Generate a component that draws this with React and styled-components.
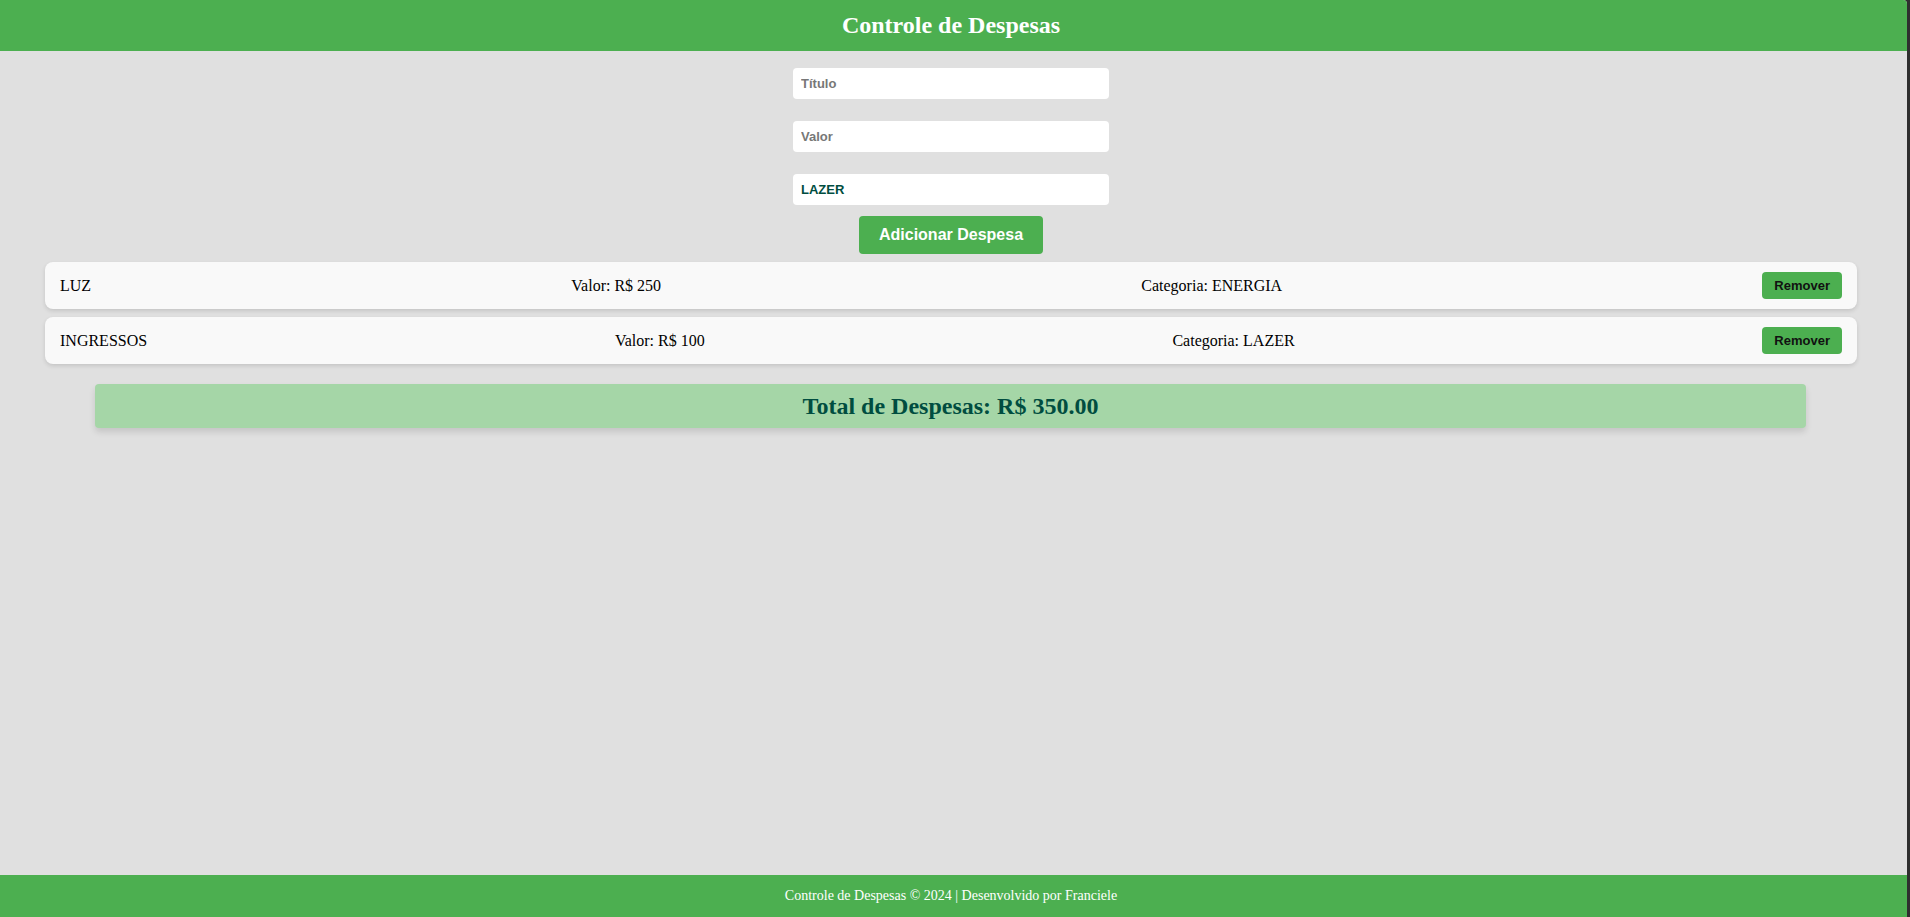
import React from "react";
import styled, { createGlobalStyle } from "styled-components";

const GlobalStyle = createGlobalStyle`
  html, body { margin: 0; padding: 0; }
  body { font-family: "Liberation Serif", "Times New Roman", serif; background: #2f2f2f; }
  * { box-sizing: content-box; }
`;

const Shell = styled.div`
  display: flex;
  min-height: 100vh;
  background: #2f2f2f;
`;

const Page = styled.div`
  flex: 1;
  margin-right: 3px;
  display: flex;
  flex-direction: column;
  min-height: 100vh;
  background: #e0e0e0;
  border-top-right-radius: 4px;
  overflow: hidden;
`;

const Header = styled.header`
  background: #4caf50;
  padding: 12px 5px 12px 0;
  text-align: center;
`;

const Title = styled.h1`
  margin: 0;
  font-family: "Liberation Serif", "Times New Roman", serif;
  font-size: 24px;
  line-height: 27px;
  font-weight: bold;
  color: #ffffff;
`;

const Main = styled.main`
  flex: 1;
  padding: 17px 5px 0 0;
  display: flex;
  flex-direction: column;
`;

const Form = styled.form`
  display: flex;
  flex-direction: column;
  align-items: center;
`;

const Field = styled.input`
  width: 300px;
  padding: 8px;
  height: 15px;
  border: none;
  border-radius: 4px;
  background: #ffffff;
  font-family: "Liberation Sans", Arial, sans-serif;
  font-size: 13px;
  font-weight: bold;
  color: #004d40;
  margin-bottom: ${(p) => p.$gap}px;
  outline: none;
  &::placeholder { color: #777777; }
`;

const Select = styled.select`
  appearance: none;
  -webkit-appearance: none;
  width: 300px;
  padding: 8px;
  height: 15px;
  line-height: 15px;
  box-sizing: content-box;
  border: none;
  border-radius: 4px;
  background: #ffffff;
  font-family: "Liberation Sans", Arial, sans-serif;
  font-size: 13px;
  font-weight: bold;
  color: #004d40;
  margin-bottom: 11px;
  outline: none;
`;

const AddButton = styled.button`
  background: #4caf50;
  color: #ffffff;
  border: none;
  border-radius: 4px;
  padding: 10px 20px;
  height: 18px;
  line-height: 18px;
  font-family: "Liberation Sans", Arial, sans-serif;
  font-size: 16px;
  font-weight: bold;
  cursor: pointer;
`;

const List = styled.ul`
  list-style: none;
  margin: 8px 45px 0;
  padding: 0;
  display: flex;
  flex-direction: column;
  gap: 8px;
`;

const Item = styled.li`
  display: flex;
  justify-content: space-between;
  align-items: center;
  background: #f9f9f9;
  border-radius: 8px;
  padding: 10px 15px;
  box-shadow: 0 2px 4px rgba(0, 0, 0, 0.12);
  font-family: "Liberation Serif", "Times New Roman", serif;
  font-size: 16px;
  color: #000000;
`;

const Cell = styled.span`
  white-space: nowrap;
`;

const RemoveButton = styled.button`
  background: #4caf50;
  color: #111111;
  border: none;
  border-radius: 4px;
  padding: 6px 12px;
  height: 15px;
  line-height: 15px;
  font-family: "Liberation Sans", Arial, sans-serif;
  font-size: 13px;
  font-weight: bold;
  cursor: pointer;
`;

const TotalBox = styled.div`
  margin: 20px 96px 0 95px;
  background: #a5d6a7;
  border-radius: 4px;
  padding: 8px;
  text-align: center;
  box-shadow: 0 4px 6px rgba(0, 0, 0, 0.12);
`;

const TotalText = styled.h2`
  margin: 0;
  font-family: "Liberation Serif", "Times New Roman", serif;
  font-size: 24px;
  line-height: 28px;
  font-weight: bold;
  color: #004d40;
`;

const Footer = styled.footer`
  background: #4caf50;
  padding: 13px 5px 13px 0;
  text-align: center;
  font-family: "Liberation Serif", "Times New Roman", serif;
  font-size: 14px;
  line-height: 16px;
  color: #ffffff;
`;

const expenses = [
  { id: 1, titulo: "LUZ", valor: 250, categoria: "ENERGIA" },
  { id: 2, titulo: "INGRESSOS", valor: 100, categoria: "LAZER" },
];

export default function App() {
  const total = expenses.reduce((s, e) => s + e.valor, 0);
  return (
    <>
      <GlobalStyle />
      <Shell>
        <Page>
          <Header>
            <Title>Controle de Despesas</Title>
          </Header>
          <Main>
            <Form onSubmit={(e) => e.preventDefault()}>
              <Field $gap={22} placeholder="Título" />
              <Field $gap={22} placeholder="Valor" />
              <Select defaultValue="LAZER">
                <option value="ENERGIA">ENERGIA</option>
                <option value="LAZER">LAZER</option>
              </Select>
              <AddButton type="submit">Adicionar Despesa</AddButton>
            </Form>
            <List>
              {expenses.map((e) => (
                <Item key={e.id}>
                  <Cell>{e.titulo}</Cell>
                  <Cell>Valor: R$ {e.valor}</Cell>
                  <Cell>Categoria: {e.categoria}</Cell>
                  <RemoveButton type="button">Remover</RemoveButton>
                </Item>
              ))}
            </List>
            <TotalBox>
              <TotalText>Total de Despesas: R$ {total.toFixed(2)}</TotalText>
            </TotalBox>
          </Main>
          <Footer>Controle de Despesas © 2024 | Desenvolvido por Franciele</Footer>
        </Page>
      </Shell>
    </>
  );
}
